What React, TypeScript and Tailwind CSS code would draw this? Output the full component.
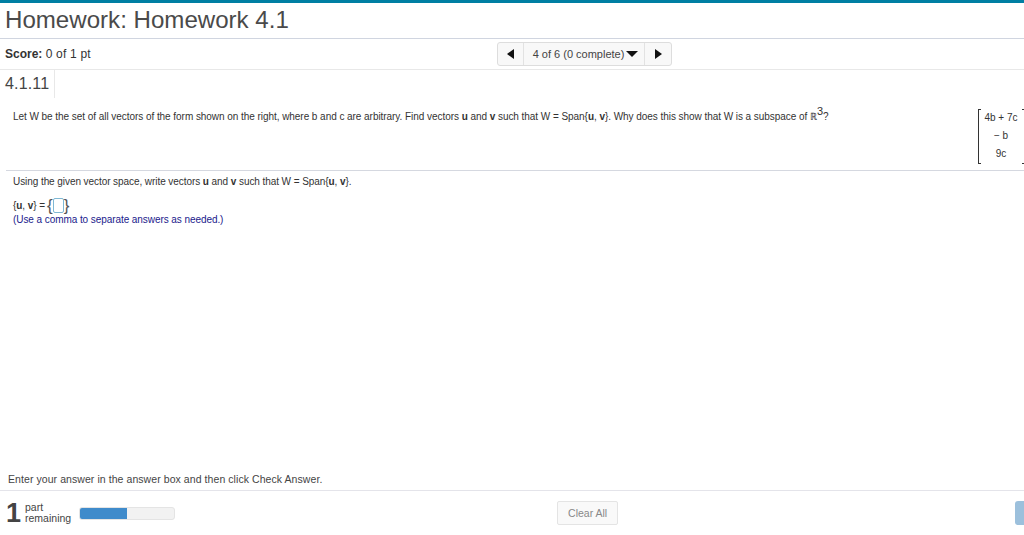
function Triangle({ dir }: { dir: "left" | "right" | "down" }) {
  const points = dir === "left" ? "7,0 7,10 0,5" : dir === "right" ? "0,0 7,5 0,10" : "0,0 12,0 6,6";
  const size = dir === "down" ? "w-[12px] h-[6px]" : "w-[7px] h-[10px]";
  const box = dir === "down" ? "0 0 12 6" : "0 0 7 10";
  return (
    <svg viewBox={box} className={size}>
      <polygon points={points} fill="#111" />
    </svg>
  );
}

function Matrix() {
  return (
    <div className="-mr-px flex h-[55px] w-[47px] shrink-0">
      <div className="w-[3px] border-y border-l border-[#333]" />
      <div className="flex flex-1 flex-col items-center justify-between pb-[3px] pr-[1px] pt-[2px] text-[10px] leading-[14px] text-[#333]">
        <span className="whitespace-nowrap">4b + 7c</span>
        <span className="whitespace-nowrap">− b</span>
        <span className="whitespace-nowrap">9c</span>
      </div>
      <div className="w-[3px] border-y border-r border-[#333]" />
    </div>
  );
}

export default function App() {
  return (
    <div className="flex h-[535px] w-[1024px] flex-col overflow-hidden bg-white font-['Liberation_Sans',Arial,sans-serif]">
      <div className="h-[3px] shrink-0 bg-[#007fa3]" />
      <h1 className="h-[36px] shrink-0 border-b border-[#d0d5e0] pl-[5px] text-[24.1px] leading-[33px] text-[#4a4a4a]">
        Homework: Homework 4.1
      </h1>
      <div className="relative flex h-[31px] shrink-0 items-center border-b border-[#e8e8e8] pl-[5px] text-[12px] text-[#333]">
        <span>
          <b>Score:</b> <span className="tracking-[0.2px]">0 of 1 pt</span>
        </span>
        <div className="absolute left-[497px] top-[3px] flex h-[24px] w-[175px] items-center rounded-[3px] border border-[#ddd] bg-[#f8f8f8] text-[11px] text-[#444]">
          <div className="flex h-full w-[26px] items-center justify-center border-r border-[#e2e2e2]">
            <Triangle dir="left" />
          </div>
          <div className="flex h-full flex-1 items-center justify-center gap-[2px] border-r border-[#e2e2e2] pl-[3px]">
            <span>4 of 6 (0 complete)</span>
            <Triangle dir="down" />
          </div>
          <div className="flex h-full w-[26px] items-center justify-center">
            <Triangle dir="right" />
          </div>
        </div>
      </div>
      <div className="flex h-[28px] shrink-0">
        <div className="w-[55px] border-r border-[#e8e8e8] pl-[5px] text-[16px] leading-[28px] tracking-[0.15px] text-[#444]">4.1.11</div>
      </div>
      <div className="ml-[6px] flex h-[73px] shrink-0 justify-between border-b border-[#d5d8e0] pl-[7px] pt-[11px]">
        <p className="text-[10px] leading-[16px] tracking-[-0.05px] text-[#333]">
          Let W be the set of all vectors of the form shown on the right, where b and c are arbitrary. Find vectors <b>u</b> and <b>v</b> such that W = Span{"{"}
          <b>u</b>, <b>v</b>
          {"}"}. Why does this show that W is a subspace of ℝ<sup className="text-[11px]">3</sup>?
        </p>
        <Matrix />
      </div>
      <div className="flex-1 pl-[13px] pt-[4px] text-[10px] tracking-[-0.07px] text-[#333]">
        <p className="leading-[14px]">
          Using the given vector space, write vectors <b>u</b> and <b>v</b> such that W = Span{"{"}
          <b>u</b>, <b>v</b>
          {"}"}.
        </p>
        <div className="mt-[8px] flex h-[17px] items-center">
          <span>
            {"{"}
            <b>u</b>, <b>v</b>
            {"}"} =
          </span>
          <span className="ml-[2px] text-[17px] font-light leading-none text-[#555]">{"{"}</span>
          <span className="h-[15px] w-[11px] rounded-[2px] border border-[#7fb8d4]" />
          <span className="text-[17px] font-light leading-none text-[#555]">{"}"}</span>
        </div>
        <p className="text-[10px] leading-[12px] text-[#1a1a8c]">(Use a comma to separate answers as needed.)</p>
      </div>
      <p className="h-[21px] shrink-0 pl-[8px] pt-[2px] text-[10.5px] leading-[16px] tracking-[0.07px] text-[#444]">
        Enter your answer in the answer box and then click Check Answer.
      </p>
      <div className="flex h-[45px] shrink-0 items-center border-t border-[#e4e4ea]">
        <span className="ml-[6px] text-[27px] font-bold leading-none text-[#444]">1</span>
        <span className="ml-[4px] text-[10.5px] leading-[11px] text-[#444]">
          part
          <br />
          remaining
        </span>
        <div className="ml-[8px] h-[13px] w-[96px] overflow-hidden rounded-[3px] border border-[#e4e4e4] bg-[#f2f2f2]">
          <div className="h-full w-1/2 bg-[#3f8bcb]" />
        </div>
        <button className="ml-[382px] h-[24px] w-[61px] rounded-[2px] border border-[#e4e4e4] bg-[#f9f9f9] pt-[1px] text-[10.5px] text-[#888]">
          Clear All
        </button>
        <div className="ml-auto h-[24px] w-[12px] shrink-0 translate-x-[3px] rounded-l-[3px] bg-[#9cc0dc]" />
      </div>
    </div>
  );
}
